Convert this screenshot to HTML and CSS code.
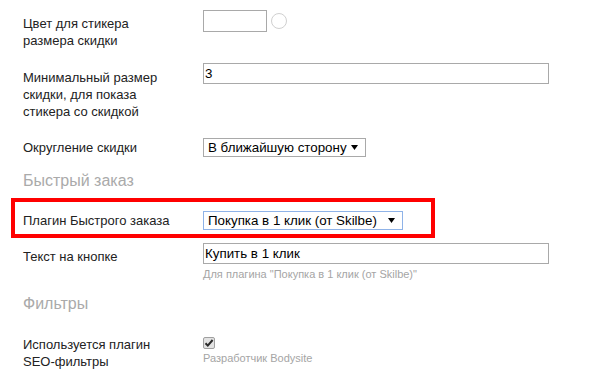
FILE: index.html
```html
<!DOCTYPE html>
<html lang="ru">
<head>
<meta charset="utf-8">
<title>Настройки</title>
<link rel="stylesheet" href="styles.css">
</head>
<body>
<div class="form">
  <div class="row row-color">
    <div class="label label-input">Цвет для стикера<br>размера скидки</div>
    <div class="ctrl ctrl-inline">
      <span class="color-box"></span>
      <span class="swatch"></span>
    </div>
  </div>

  <div class="row row-min">
    <div class="label label-input">Минимальный размер<br>скидки, для показа<br>стикера со скидкой</div>
    <div class="ctrl">
      <div class="text-input">3</div>
    </div>
  </div>

  <div class="row row-round">
    <div class="label label-select">Округление скидки</div>
    <div class="ctrl">
      <div class="select select-round"><span class="select-text">В ближайшую сторону</span><svg class="arrow" width="7" height="5" viewBox="0 0 7 5"><polygon points="0,0 7,0 3.5,5" fill="#000"/></svg></div>
    </div>
  </div>

  <div class="section section-quick">Быстрый заказ</div>

  <div class="highlight">
    <div class="row row-plugin">
      <div class="label label-select">Плагин Быстрого заказа</div>
      <div class="ctrl">
        <div class="select select-plugin focused"><span class="select-text">Покупка в 1 клик (от Skilbe)</span><svg class="arrow" width="7" height="5" viewBox="0 0 7 5"><polygon points="0,0 7,0 3.5,5" fill="#000"/></svg></div>
      </div>
    </div>
  </div>

  <div class="row row-button">
    <div class="label label-input">Текст на кнопке</div>
    <div class="ctrl">
      <div class="text-input">Купить в 1 клик</div>
      <div class="hint hint-input">Для плагина "Покупка в 1 клик (от Skilbe)"</div>
    </div>
  </div>

  <div class="section section-filters">Фильтры</div>

  <div class="row row-seo">
    <div class="label label-check">Используется плагин<br>SEO-фильтры</div>
    <div class="ctrl">
      <span class="checkbox"><svg width="12" height="12" viewBox="0 0 12 12"><path d="M2.5 6.2 L4.8 8.6 L9.6 3" fill="none" stroke="#2b2b2b" stroke-width="2"/></svg></span>
      <div class="hint hint-check">Разработчик Bodysite</div>
    </div>
  </div>
</div>
</body>
</html>
```

FILE: styles.css
```css
html, body {
  margin: 0;
  padding: 0;
  background: #fff;
}

body {
  font-family: "Liberation Sans", Arial, sans-serif;
  font-size: 13px;
  color: #222;
}

.form {
  padding: 10px 0 0 23px;
}

.row {
  display: grid;
  grid-template-columns: 180px 1fr;
  align-items: start;
}

.label {
  font-size: 13px;
  line-height: 17px;
  color: #222;
}

.label-input { padding-top: 5px; }
.label-select { padding-top: 1px; }
.label-check { padding-top: 0; }

.ctrl-inline {
  display: flex;
  align-items: center;
  gap: 4px;
}

.color-box {
  display: block;
  width: 62px;
  height: 20px;
  border: 1px solid #a9a9a9;
  background: #fff;
}

.swatch {
  display: block;
  width: 14px;
  height: 14px;
  border: 1px solid #d0d0d0;
  border-radius: 50%;
  margin-top: -1px;
}

.row-min { margin-top: 14px; }
.row-min .label-input { padding-top: 6px; }

.text-input {
  box-sizing: border-box;
  width: 346px;
  height: 21px;
  border: 1px solid #a9a9a9;
  padding: 0 1px;
  font-size: 13.333px;
  line-height: 19px;
  color: #000;
}

.row-round { margin-top: 18px; }

.select {
  box-sizing: border-box;
  height: 19px;
  border: 1px solid #a9a9a9;
  display: flex;
  align-items: center;
  justify-content: space-between;
  padding: 0 7px 0 4px;
  font-size: 13.333px;
  color: #000;
}

.select-round { width: 163px; }
.select-plugin { width: 200px; }

.select.focused {
  border-color: #8fb3e8;
}

.select-text {
  line-height: 17px;
  white-space: nowrap;
}

.arrow {
  display: block;
  flex: none;
}

.section {
  font-size: 16px;
  line-height: 19px;
  color: #aaa;
}

.section-quick { margin-top: 14px; }

.highlight {
  margin: 8px 0 0 -12px;
  width: 408px;
  border: 4px solid #f00;
  padding: 9px 0 4px 8px;
}

.row-button { margin-top: 5px; }

.hint {
  font-size: 11px;
  line-height: 13px;
  color: #a5a5a5;
}

.hint-input { margin-top: 4px; }

.section-filters { margin-top: 13px; }

.row-seo { margin-top: 23px; }

.checkbox {
  display: block;
  box-sizing: border-box;
  width: 12px;
  height: 12px;
  margin-top: 1px;
  border: 1px solid #a0a0a0;
  border-radius: 2px;
  background: #e3e3e3;
}

.checkbox svg {
  display: block;
  margin: -1px 0 0 -1px;
}

.hint-check { margin-top: 3px; }
```
